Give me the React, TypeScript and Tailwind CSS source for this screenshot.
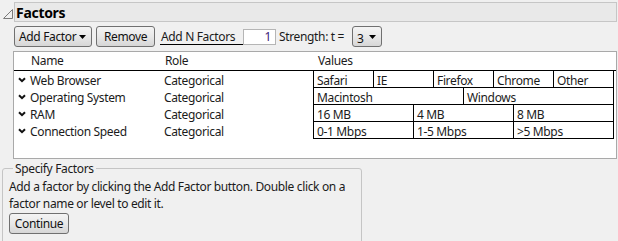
const factors = [
  { name: "Web Browser", role: "Categorical", values: ["Safari", "IE", "Firefox", "Chrome", "Other"] },
  { name: "Operating System", role: "Categorical", values: ["Macintosh", "Windows"] },
  { name: "RAM", role: "Categorical", values: ["16 MB", "4 MB", "8 MB"] },
  { name: "Connection Speed", role: "Categorical", values: ["0-1 Mbps", "1-5 Mbps", ">5 Mbps"] },
];

const DropArrow = () => (
  <svg width="7" height="4" viewBox="0 0 7 4" className="shrink-0">
    <polygon points="0,0 7,0 3.5,4" fill="#000" />
  </svg>
);

const Chevron = () => (
  <svg width="8" height="6" viewBox="0 0 8 6" className="mx-[4px] shrink-0">
    <polyline points="1,1.2 4,4.2 7,1.2" fill="none" stroke="#111" strokeWidth="2" />
  </svg>
);

const WinButton = ({ children, className = "" }: { children: React.ReactNode; className?: string }) => (
  <div
    className={`flex h-[21px] shrink-0 items-center whitespace-nowrap rounded-[3px] border border-[#707070] bg-gradient-to-b from-[#f4f4f4] via-[#e8e8e8] to-[#d6d6d6] text-[#111] ${className}`}
  >
    {children}
  </div>
);

export default function App() {
  return (
    <div className="h-[241px] w-[618px] overflow-hidden bg-[#f0f0f0] font-['Noto_Sans',sans-serif] text-[12px] leading-[17px] tracking-[-0.35px] text-[#1b1b1b]">
      {/* outline header */}
      <div className="flex items-center pt-[2px]">
        <div className="flex w-[14px] justify-center pt-[3px]">
          <svg width="11" height="10" viewBox="0 0 11 10">
            <polygon points="1.5,9.5 10.5,9.5 10.5,0.5" fill="none" stroke="#7a7a7a" strokeWidth="1" />
          </svg>
        </div>
        <div className="mr-[1px] flex h-[20px] flex-1 items-center border border-[#c6c6c6] bg-[#e9e9e9] pl-[1px] text-[14px] font-bold tracking-[-0.3px] text-black">
          Factors
        </div>
      </div>

      {/* toolbar */}
      <div className="ml-[14px] mt-[4px] flex h-[21px] items-center">
        <WinButton className="w-[78px] justify-between pl-[4px] pr-[5px]">
          <span>Add Factor</span>
          <DropArrow />
        </WinButton>
        <WinButton className="ml-[4px] w-[59px] justify-center">Remove</WinButton>
        <span className="ml-[5px] w-[83px] shrink-0 whitespace-nowrap border-b border-black pl-[1px] leading-[15px]">
          Add N Factors
        </span>
        <div className="h-[16px] w-[33px] shrink-0 border border-[#b5b5b5] bg-white pr-[4px] text-right leading-[14px] text-[#3c1a78]">
          1
        </div>
        <span className="ml-[3px] w-[69px] shrink-0 whitespace-nowrap">Strength: t =</span>
        <WinButton className="ml-[4px] w-[30px] justify-between pl-[4px] pr-[5px]">
          <span className="pt-[3px]">3</span>
          <DropArrow />
        </WinButton>
      </div>

      {/* factor table */}
      <div className="ml-[13px] mr-[1px] mt-[4px] h-[108px] border border-[#a9a9a9] bg-white">
        <div className="flex h-[19px] items-end border-b border-black pb-[1px]">
          <span className="ml-[17px] w-[134px]">Name</span>
          <span className="w-[149px]">Role</span>
          <span className="pl-[4px]">Values</span>
        </div>
        {factors.map((f) => (
          <div key={f.name} className="flex h-[17px]">
            <div className="flex h-[17px] items-center pt-[1px]">
              <Chevron />
            </div>
            <span className="w-[134px] whitespace-nowrap pt-[2px] leading-[15px]">{f.name}</span>
            <span className="w-[149px] pt-[2px] leading-[15px]">{f.role}</span>
            <div className="flex h-[17px] w-[301px] border-b border-l border-black">
              {f.values.map((v) => (
                <div key={v} className="h-[16px] flex-1 whitespace-nowrap border-r border-black pl-[3px] pt-[3px] leading-[13px]">
                  {v}
                </div>
              ))}
            </div>
          </div>
        ))}
      </div>

      {/* specify factors group */}
      <fieldset className="ml-[2px] mt-[1px] h-[90px] w-[360px] rounded-[3px] border border-[#c5c5c5] pl-[6px]">
        <legend className="ml-[4px] px-[2px]">Specify Factors</legend>
        <p className="mt-[1px]">
          Add a factor by clicking the Add Factor button. Double click on a
          <br />
          factor name or level to edit it.
        </p>
        <WinButton className="mt-[1px] w-[60px] justify-center">Continue</WinButton>
      </fieldset>
    </div>
  );
}
